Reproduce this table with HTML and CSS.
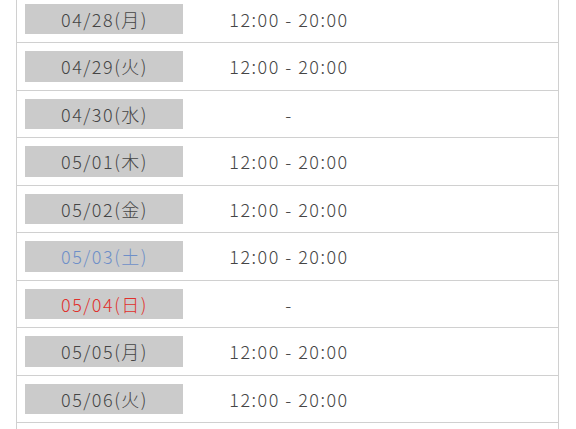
FILE: index.html
```html
<!DOCTYPE html>
<html lang="ja">
<head>
<meta charset="utf-8">
<link rel="stylesheet" href="styles.css">
</head>
<body>
<div class="schedule">
  <div class="row"><div class="date">04/28(月)</div><div class="time">12:00 - 20:00</div></div>
  <div class="row"><div class="date">04/29(火)</div><div class="time">12:00 - 20:00</div></div>
  <div class="row"><div class="date">04/30(水)</div><div class="time">-</div></div>
  <div class="row"><div class="date">05/01(木)</div><div class="time">12:00 - 20:00</div></div>
  <div class="row"><div class="date">05/02(金)</div><div class="time">12:00 - 20:00</div></div>
  <div class="row"><div class="date sat">05/03(土)</div><div class="time">12:00 - 20:00</div></div>
  <div class="row"><div class="date sun">05/04(日)</div><div class="time">-</div></div>
  <div class="row"><div class="date">05/05(月)</div><div class="time">12:00 - 20:00</div></div>
  <div class="row"><div class="date">05/06(火)</div><div class="time">12:00 - 20:00</div></div>
</div>
</body>
</html>
```
FILE: styles.css
```css
html, body {
  margin: 0;
  padding: 0;
  background: #fff;
  overflow: hidden;
}
body {
  font-family: "Noto Sans CJK JP", "Noto Sans", sans-serif;
  color: #454545;
}
.schedule {
  margin: -4.5px 16px 0 16px;
  padding-bottom: 40px;
  width: 541px;
  border-left: 1px solid #d0d0d0;
  border-right: 1px solid #d0d0d0;
}
.row {
  display: flex;
  align-items: center;
  padding: 8px 0 8px 8px;
  border-bottom: 1px solid #d0d0d0;
}
.date {
  width: 158px;
  height: 30.5px;
  background: #cbcbcb;
  display: flex;
  align-items: center;
  justify-content: center;
  font-size: 18px;
  font-weight: 300;
  letter-spacing: 1.5px;
  text-indent: 1px;
}
.date.sat { color: #6e8fc8; }
.date.sun { color: #e0302c; }
.time {
  width: 212px;
  text-align: center;
  font-size: 18px;
  font-weight: 300;
  letter-spacing: 1.5px;
}
```
